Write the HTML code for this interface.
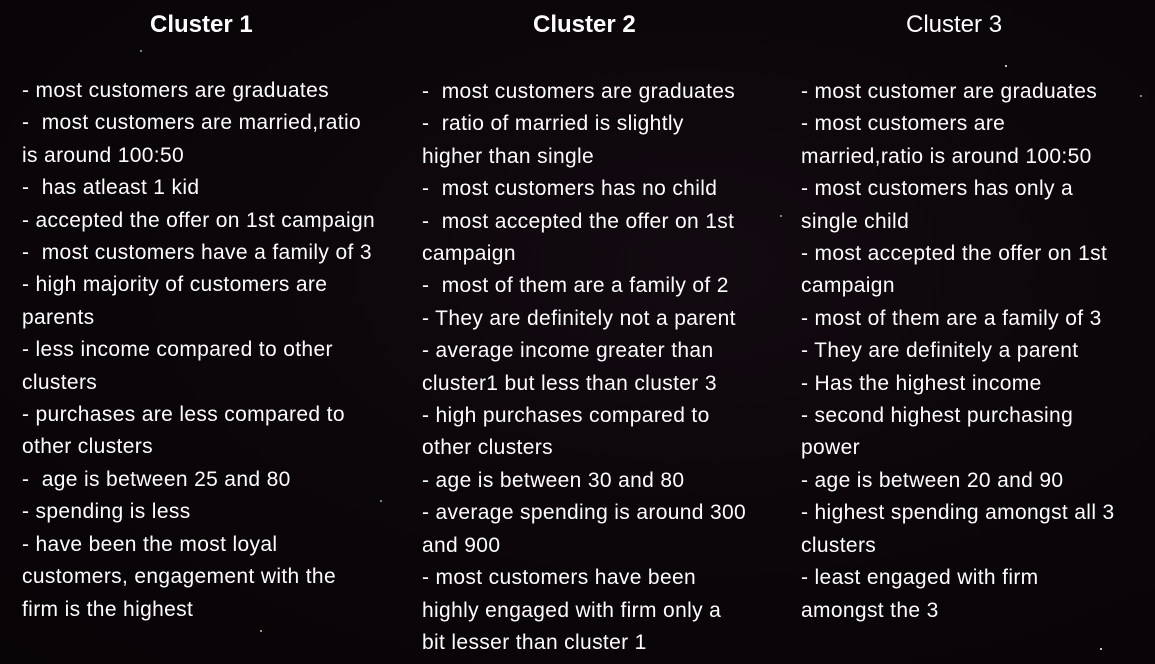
<!DOCTYPE html>
<html><head><meta charset="utf-8"><style>
html,body{margin:0;padding:0}
body{width:1155px;height:664px;overflow:hidden;position:relative;
background:radial-gradient(ellipse at 60% 40%,#120a10 0%,#0a0508 60%,#070406 100%);
font-family:"Liberation Sans",sans-serif;color:#fff}
.h{position:absolute;top:10px;font-size:24px;line-height:30px}
.col{position:absolute;top:75px;font-size:21px;line-height:32.4px;white-space:nowrap;letter-spacing:0.35px}
.s{position:absolute;width:2px;height:2px;border-radius:1px;background:#9ab}
</style></head><body>
<div class="h" style="left:150px;font-weight:bold">Cluster 1</div>
<div class="h" style="left:533px;font-weight:bold">Cluster 2</div>
<div class="h" style="left:906px">Cluster 3</div>
<div class="col" style="left:22px">
<div>- most customers are graduates</div>
<div>-&nbsp; most customers are married,ratio</div>
<div>is around 100:50</div>
<div>-&nbsp; has atleast 1 kid</div>
<div>- accepted the offer on 1st campaign</div>
<div>-&nbsp; most customers have a family of 3</div>
<div>- high majority of customers are</div>
<div>parents</div>
<div>- less income compared to other</div>
<div>clusters</div>
<div>- purchases are less compared to</div>
<div>other clusters</div>
<div>-&nbsp; age is between 25 and 80</div>
<div>- spending is less</div>
<div>- have been the most loyal</div>
<div>customers, engagement with the</div>
<div>firm is the highest</div>
</div>
<div class="col" style="left:422px;top:76px">
<div>-&nbsp; most customers are graduates</div>
<div>-&nbsp; ratio of married is slightly</div>
<div>higher than single</div>
<div>-&nbsp; most customers has no child</div>
<div>-&nbsp; most accepted the offer on 1st</div>
<div>campaign</div>
<div>-&nbsp; most of them are a family of 2</div>
<div>- They are definitely not a parent</div>
<div>- average income greater than</div>
<div>cluster1 but less than cluster 3</div>
<div>- high purchases compared to</div>
<div>other clusters</div>
<div>- age is between 30 and 80</div>
<div>- average spending is around 300</div>
<div>and 900</div>
<div>- most customers have been</div>
<div>highly engaged with firm only a</div>
<div>bit lesser than cluster 1</div>
</div>
<div class="col" style="left:801px;top:76px">
<div>- most customer are graduates</div>
<div>- most customers are</div>
<div>married,ratio is around 100:50</div>
<div>- most customers has only a</div>
<div>single child</div>
<div>- most accepted the offer on 1st</div>
<div>campaign</div>
<div>- most of them are a family of 3</div>
<div>- They are definitely a parent</div>
<div>- Has the highest income</div>
<div>- second highest purchasing</div>
<div>power</div>
<div>- age is between 20 and 90</div>
<div>- highest spending amongst all 3</div>
<div>clusters</div>
<div>- least engaged with firm</div>
<div>amongst the 3</div>
</div>
<div class="s" style="left:140px;top:50px"></div>
<div class="s" style="left:1005px;top:65px;background:#fff"></div>
<div class="s" style="left:1100px;top:648px;background:#fff"></div>
<div class="s" style="left:780px;top:215px"></div>
<div class="s" style="left:380px;top:500px"></div>
<div class="s" style="left:600px;top:640px"></div>
<div class="s" style="left:260px;top:630px;background:#cc9"></div>
<div class="s" style="left:1140px;top:95px"></div>
</body></html>
